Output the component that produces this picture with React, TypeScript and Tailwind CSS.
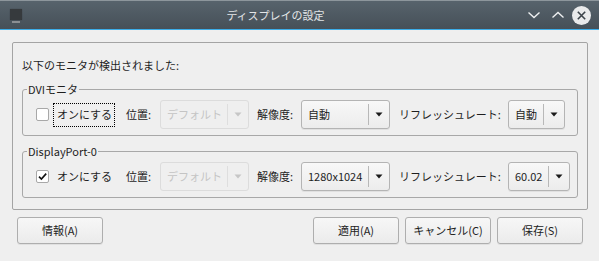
import React from "react";

const Arrow = ({ disabled }: { disabled?: boolean }) => (
  <svg width="8" height="5" viewBox="0 0 8 5">
    <path d="M0.5 0.5 H7.5 L4 4.5 Z" fill={disabled ? "#c6c6c6" : "#1a1a1a"} />
  </svg>
);

const Combo = ({
  value,
  width,
  disabled,
}: {
  value: string;
  width: string;
  disabled?: boolean;
}) => (
  <div
    className={`flex h-[29px] items-center rounded-[3px] border ${width} ${
      disabled
        ? "border-[#dcdcdc] bg-[#efefef] text-[#c4c4c4]"
        : "border-[#b4b4b4] bg-gradient-to-b from-[#f8f8f8] to-[#ececec] text-[#1e1e1e] shadow-[0_1px_0_rgba(0,0,0,0.06)]"
    }`}
  >
    <span className="flex-1 pl-[6px] whitespace-nowrap">{value}</span>
    <span
      className={`h-[21px] w-px ${disabled ? "bg-[#dedede]" : "bg-[#b8b8b8]"}`}
    />
    <span className="flex w-[20px] items-center justify-center">
      <Arrow disabled={disabled} />
    </span>
  </div>
);

const Check = ({ checked }: { checked?: boolean }) => (
  <div className="flex h-[13px] w-[13px] items-center justify-center rounded-[2px] border border-[#a8a8a8] bg-white">
    {checked && (
      <svg width="11" height="11" viewBox="0 0 11 11">
        <path
          d="M2 5.6 L4.4 8 L9.2 2.6"
          fill="none"
          stroke="#111"
          strokeWidth="1.6"
        />
      </svg>
    )}
  </div>
);

const MonitorGroup = ({
  title,
  checked,
  focused,
  resolution,
  refresh,
  refreshWidth,
}: {
  title: string;
  checked?: boolean;
  focused?: boolean;
  resolution: string;
  refresh: string;
  refreshWidth: string;
}) => (
  <div className="relative h-[47px] rounded-[3px] border border-[#a8a8a8] pl-[13px] pt-[10px]">
    <span className="absolute left-[4px] top-[-9px] bg-[#efefef] px-px leading-[16px]">
      {title}
    </span>
    <div className="flex h-[29px] items-center">
      <Check checked={checked} />
      <div
        className={`ml-[4px] flex h-[24px] w-[62px] items-center border pl-[3px] ${
          focused ? "border-dotted border-black" : "border-transparent"
        }`}
      >
        オンにする
      </div>
      <span className="ml-[11px] w-[34px]">位置:</span>
      <Combo value="デフォルト" width="w-[89px]" disabled />
      <span className="ml-[8px] w-[44px]">解像度:</span>
      <Combo value={resolution} width="w-[89px]" />
      <span className="ml-[9px] w-[109px] whitespace-nowrap">
        リフレッシュレート:
      </span>
      <Combo value={refresh} width={refreshWidth} />
    </div>
  </div>
);

const Button = ({ label }: { label: string }) => (
  <button className="h-[27px] w-[86px] rounded-[3px] border border-[#aeaeae] bg-gradient-to-b from-[#f7f7f7] to-[#ebebeb] text-[#222] shadow-[0_1px_0_rgba(0,0,0,0.06)]">
    {label}
  </button>
);

export default function App() {
  return (
    <div
      className="h-[261px] w-[599px] overflow-hidden bg-[#efefef] text-[11px] text-[#1e1e1e]"
      style={{ fontFamily: '"Noto Sans CJK JP", "Noto Sans", sans-serif' }}
    >
      {/* title bar */}
      <div className="flex h-[29px] items-center border-t border-[#8d969c] bg-gradient-to-b from-[#57636c] to-[#465058]">
        <div className="flex w-[24px] flex-col items-center pl-[8px] pt-[1px]">
          <div className="h-[11px] w-[12px] rounded-[1px] bg-[#363a3d] shadow-[0_0_1px_rgba(0,0,0,0.6)]" />
          <div className="mt-px h-[2px] w-[8px] bg-[#8a8f93]" />
        </div>
        <div className="flex-1 text-center text-[11px] text-[#e3e6e8]">
          ディスプレイの設定
        </div>
        <div className="flex items-center pr-[8px]">
          <svg width="14" height="10" viewBox="0 0 14 10">
            <path
              d="M1.5 2.5 L7 7.5 L12.5 2.5"
              fill="none"
              stroke="#eef0f1"
              strokeWidth="1.4"
            />
          </svg>
          <svg className="ml-[10px]" width="14" height="10" viewBox="0 0 14 10">
            <path
              d="M1.5 7.5 L7 2.5 L12.5 7.5"
              fill="none"
              stroke="#eef0f1"
              strokeWidth="1.4"
            />
          </svg>
          <svg className="ml-[7px]" width="19" height="19" viewBox="0 0 19 19">
            <circle cx="9.5" cy="9.5" r="9.5" fill="#e9eaeb" />
            <path
              d="M5.8 5.8 L13.2 13.2 M13.2 5.8 L5.8 13.2"
              stroke="#3b4349"
              strokeWidth="1.6"
            />
          </svg>
        </div>
      </div>
      <div className="h-px bg-[#3daee9]" />

      {/* main frame */}
      <div className="ml-[12px] mt-[12px] h-[168px] w-[576px] rounded-[2px] border border-[#a4a4a4] px-[9px] pt-[14px]">
        <div className="leading-[16px]">以下のモニタが検出されました:</div>
        <div className="mt-[16px]">
          <MonitorGroup
            title="DVIモニタ"
            focused
            resolution="自動"
            refresh="自動"
            refreshWidth="w-[57px]"
          />
        </div>
        <div className="mt-[15px]">
          <MonitorGroup
            title="DisplayPort-0"
            checked
            resolution="1280x1024"
            refresh="60.02"
            refreshWidth="w-[62px]"
          />
        </div>
      </div>

      {/* buttons */}
      <div className="mt-[7px] flex pl-[17px] pr-[16px]">
        <Button label="情報(A)" />
        <div className="ml-auto flex gap-[6px]">
          <Button label="適用(A)" />
          <Button label="キャンセル(C)" />
          <Button label="保存(S)" />
        </div>
      </div>
    </div>
  );
}
